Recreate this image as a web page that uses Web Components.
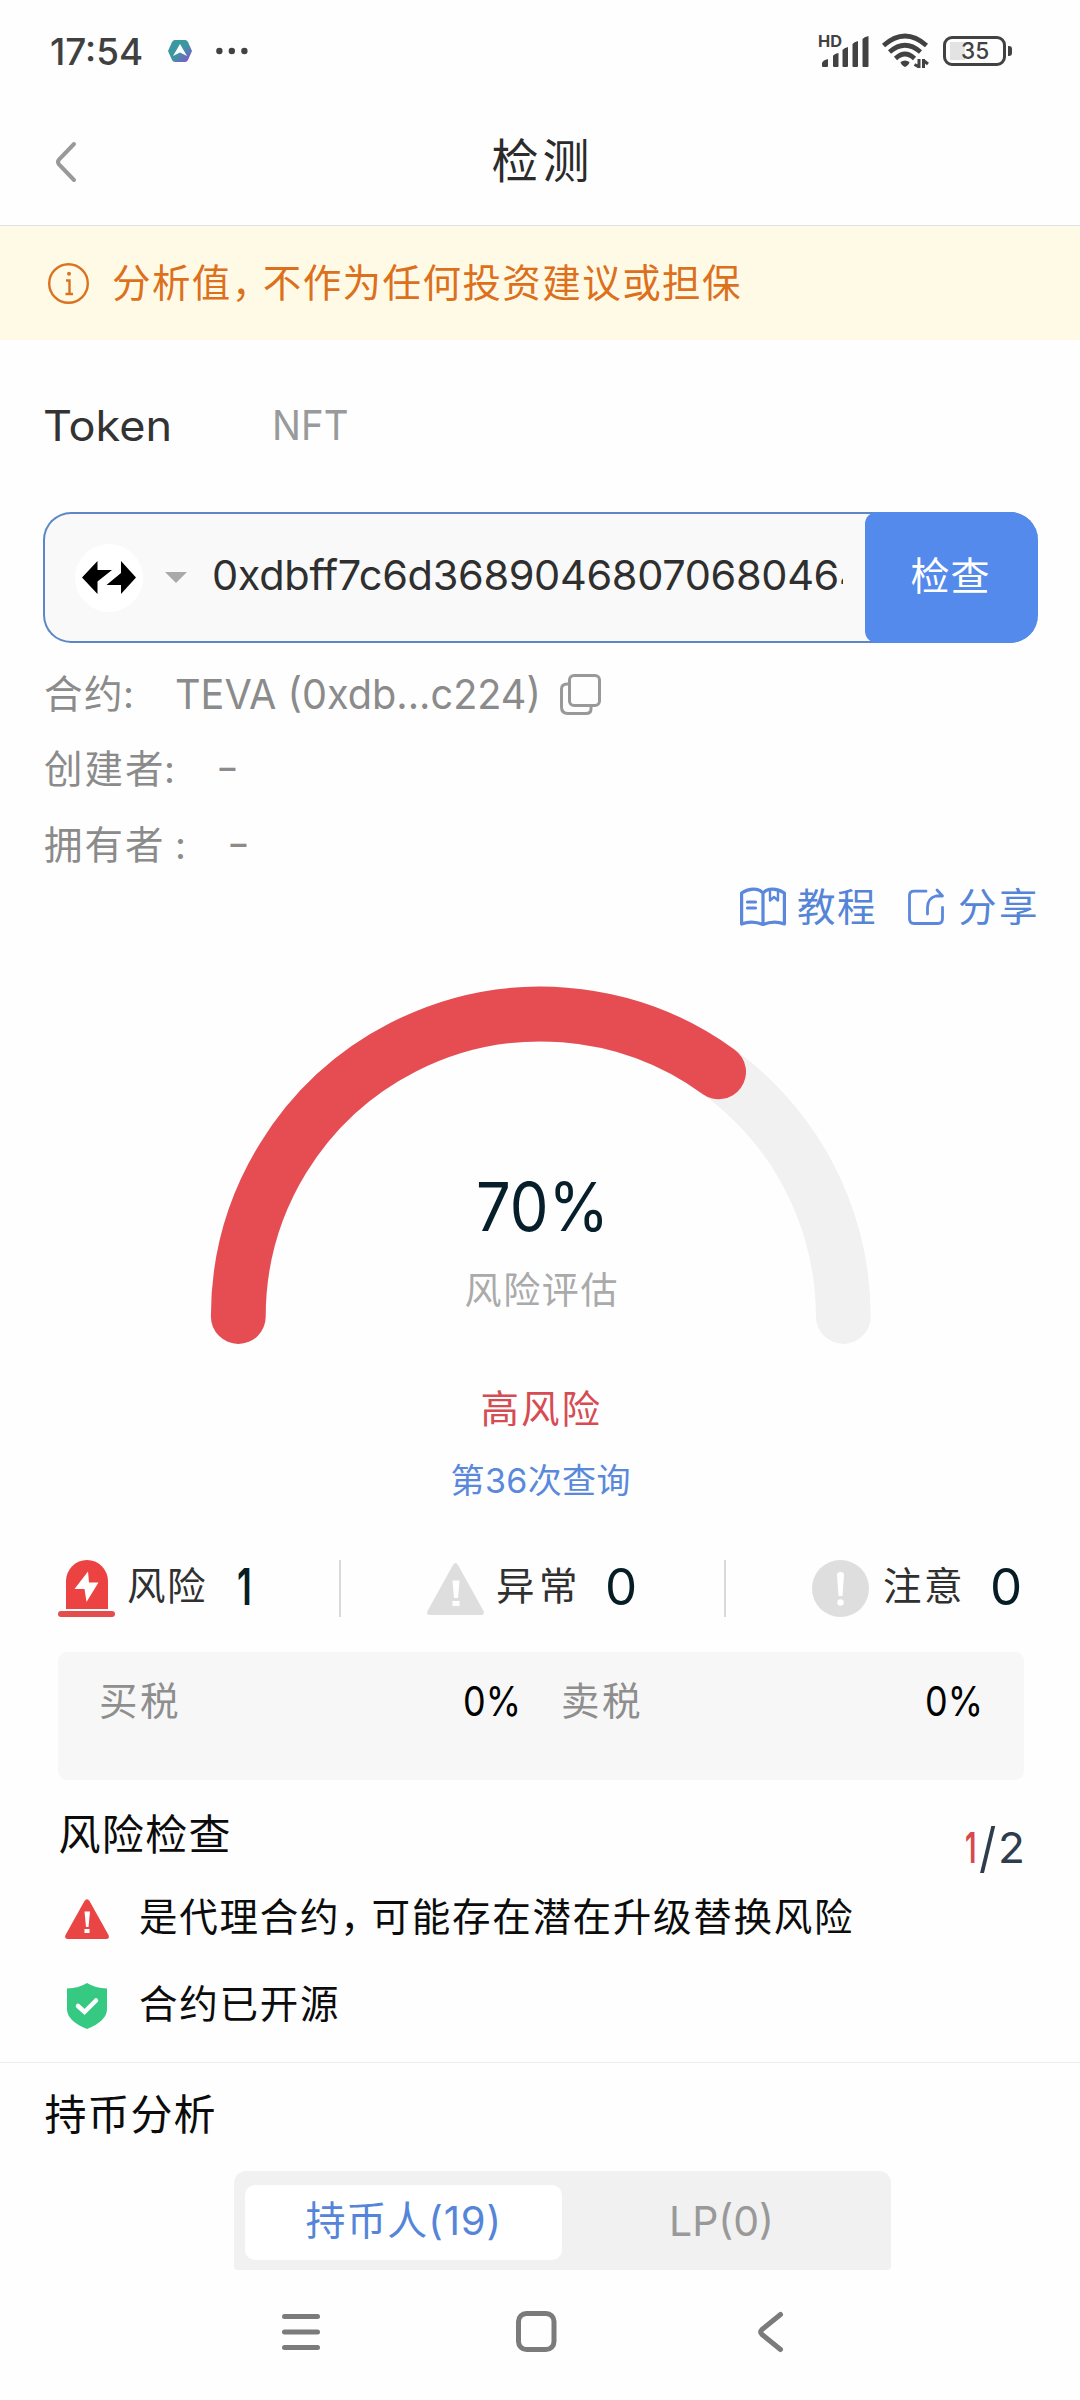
<!DOCTYPE html>
<html lang="zh-CN">
<head>
<meta charset="utf-8">
<title>检测</title>
<style>
html,body{margin:0;padding:0;background:#fefefe}
body{width:1080px;font-family:Inter,"Noto Sans CJK SC",sans-serif}
</style>
</head>
<body>
<token-check-page></token-check-page>
<script>
const FAMILY = 'Inter,"Noto Sans CJK SC",sans-serif';
const pen = document.createElement('canvas').getContext('2d');

/* One line of text whose ink spans exactly `w` pixels: tracked, or condensed/stretched with `fit`. */
class FitText extends HTMLElement {
  connectedCallback() {
    const text = this.getAttribute('text');
    const w = +this.getAttribute('w');
    const size = +this.getAttribute('size') || 38;
    const weight = this.getAttribute('weight') || 400;
    const color = this.getAttribute('color') || 'inherit';
    const stretch = this.hasAttribute('fit');
    pen.font = `${weight} ${size}px ${FAMILY}`;
    const m = pen.measureText(text);
    const ink = m.actualBoundingBoxLeft + m.actualBoundingBoxRight;
    const commas = text.split('，').length - 1;
    const n = [...text].length;
    const ls = n > 1 && !stretch ? (w - ink + commas * 9) / (n - 1) : 0;
    const k = stretch ? w / ink : 1;
    const body = text.split('，').join(`<span style="letter-spacing:${ls - 9}px">，</span>`);
    this.attachShadow({mode: 'open'}).innerHTML = `<style>
      :host{display:block;flex:none;width:${w}px;height:1.5em;line-height:1.5;font-family:${FAMILY};font-size:${size}px;font-weight:${weight};color:${color};white-space:pre}
      div{margin-left:${m.actualBoundingBoxLeft * k}px;letter-spacing:${ls}px;width:max-content;${stretch ? `transform:scaleX(${k});transform-origin:0 0` : ''}}
    </style><div>${body}</div>`;
  }
}
customElements.define('fit-text', FitText);

const define = (name, css, html) => {
  const t = document.createElement('template');
  t.innerHTML = `<style>:host{display:block;box-sizing:border-box}*{box-sizing:border-box}svg,i{display:block;flex:none;overflow:visible}.row{display:flex;align-items:center}${css}</style>${html}`;
  customElements.define(name, class extends HTMLElement {
    constructor() {
      super();
      this.attachShadow({mode: 'open'}).append(t.content.cloneNode(true));
    }
  });
};

define('status-bar', `
  :host{height:102px;padding:0 68px 0 51px;display:flex;align-items:center;justify-content:space-between}
  .hex{margin:0 24px 0 26px}
  .signal{width:50px;margin-right:13px}
  .battery{width:63px;height:30px;border:3px solid #424242;border-radius:9px;margin-left:15px;background:linear-gradient(#e3e3e3,#e3e3e3) 4px 3px/15px 18px no-repeat;display:flex;align-items:center;padding-left:16px}
  .nub{width:4px;height:10px;border-radius:0 3px 3px 0;background:#424242;margin-left:2px}
`, `
  <div class="row">
    <fit-text fit style="margin-top:2px" text="17:54" w="91" size="37" weight="500" color="#404040"></fit-text>
    <svg class="hex" width="24" height="22" viewBox="0 0 24 22"><defs><linearGradient id="g" x1="0" y1="0" x2="1" y2="1"><stop offset=".5" stop-color="#3b98a0"/><stop offset=".85" stop-color="#7561c6"/></linearGradient></defs><path d="M7 0H17Q19 0 20 2L24 11L20 20Q19 22 17 22H7Q5 22 4 20L0 11L4 2Q5 0 7 0Z" fill="url(#g)"/><path d="M12 4L19 16L12 12.5L5 16Z" fill="#fff"/></svg>
    <svg width="32" height="8" viewBox="0 0 32 8" fill="#424242"><circle cx="3.400" cy="4" r="3.200"/><circle cx="15.800" cy="4" r="3.200"/><circle cx="28.400" cy="4" r="3.200"/></svg>
  </div>
  <div class="row">
    <svg class="signal" height="32" viewBox="0 0 50 32" fill="#424242"><text x="-1" y="12" font-family="Inter" font-weight="700" font-size="15.5" textLength="24" lengthAdjust="spacingAndGlyphs">HD</text><path d="M3 31V28Q4 25 9 24V31Q9 32 8 32H4Q3 32 3 31ZM14 31V21Q15 19 19.500 18V31Q19.500 32 18.500 32H15Q14 32 14 31ZM23.500 31V15Q25 13 29 12V31Q29 32 28 32H24.500Q23.500 32 23.500 31ZM33.500 31V9Q35 7 39 6V31Q39 32 38 32H34.500Q33.500 32 33.500 31ZM43.500 31V4Q45 2 49.500 1V31Q49.500 32 48.500 32H44.500Q43.500 32 43.500 31Z"/></svg>
    <svg width="46" height="34" viewBox="0 0 46 34" fill="none" stroke="#424242" stroke-width="4.600"><path d="M1.500 11.500Q23-7.500 44.500 11.500"/><path d="M7.500 18Q23 4.500 38.500 18"/><path d="M13.500 24.500Q23 15.500 32.500 24.500"/><path d="M18.500 28Q23 25 27.500 28Q27 31 23 33Q19 31 18.500 28Z" fill="#424242" stroke="none"/><path d="M37 25V34M32.500 30.500L37 33M41.500 34V25M41.500 26.500L46 30" stroke-width="3"/></svg>
    <div class="battery"><fit-text fit text="35" w="26" size="23" weight="500" color="#424242"></fit-text></div>
    <div class="nub"></div>
  </div>
`);

define('title-bar', `
  :host{height:124px;padding:0 57px 4px 56px;display:flex;align-items:center;justify-content:space-between;border-bottom:1px solid #dde2ea}
  i{width:20px}
`, `
  <svg width="20" height="40" viewBox="0 0 20 40" fill="none" stroke="#999" stroke-width="4" stroke-linecap="round"><path d="M18 2L3 17.500Q1 20 3 22.500L18 38"/></svg>
  <fit-text text="检测" w="94" size="47" color="#2b2b2b"></fit-text><i></i>
`);

define('notice-bar', `
  :host{height:114px;background:#fffae6;padding:1px 48px 0;display:flex;align-items:center;gap:24px}
`, `
  <svg width="41" height="41" viewBox="0 0 41 41" fill="none" stroke="#d9731f" stroke-width="2.400"><circle cx="20.500" cy="20.500" r="19.300"/><path d="M18 17.500H21.500V31M17.500 31H25"/><circle cx="21" cy="10.800" r="2" fill="#d9731f" stroke="none"/></svg>
  <fit-text text="分析值，不作为任何投资建议或担保" w="627" size="38.500" color="#dc701c"></fit-text>
`);

define('type-tabs', `
  :host{height:170px;padding-left:45px;display:flex;align-items:center;gap:106px}
`, `
  <fit-text fit text="Token" w="124" size="42" color="#333"></fit-text>
  <fit-text fit text="NFT" w="72" size="41.500" color="#989a9b"></fit-text>
`);

define('contract-search', `
  :host{margin:2px 42px 0 43px;height:131px;display:flex;border:2px solid #5b87c8;border-right:0;border-radius:28px;background:#f9f9f9;align-items:center}
  .logo{width:68px;height:68px;border-radius:50%;background:#fff;margin-left:30px;display:flex;align-items:center;justify-content:center}
  .caret{margin:0 27px 0 22px}
  .field{width:629px;overflow:hidden;margin-bottom:4px}
  button{all:unset;box-sizing:border-box;align-self:stretch;margin:-2px 0 -2px auto;width:173px;background:#548aec;border-radius:12px 28px 28px 12px;display:flex;align-items:center;justify-content:center;padding:0 3px 3px 0}
`, `
  <div class="logo"><svg width="54" height="33" viewBox="0 0 54 33"><path d="M0 16.500L15.500 0V9H30L15.500 20.500V33ZM54 16.500L39 0V12L24.500 24H39V33Z"/></svg></div>
  <svg class="caret" width="22" height="11" viewBox="0 0 22 11"><path d="M0 0H22L11 11Z" fill="#a9a9a9"/></svg>
  <div class="field"><fit-text text="0xdbff7c6d36890468070680464" w="650" size="41.500" color="#2f2f2f"></fit-text></div>
  <button><fit-text text="检查" w="77" size="39" color="#fff"></fit-text></button>
`);

define('contract-info', `
  :host{padding:13.500px 0 0 45px;color:#8b8b8b}
  .row{height:75.500px}
  svg{margin-left:23px}
`, `
  <div class="row"><fit-text style="margin-top:1px" text="合约" w="75" size="38.500"></fit-text><fit-text style="margin-left:5px" text=":" w="5" size="38"></fit-text><fit-text fit style="margin-left:46px" text="TEVA (0xdb...c224)" w="361" size="41.500"></fit-text>
    <svg width="41" height="41" viewBox="0 0 41 41" fill="none" stroke="#999" stroke-width="3"><rect x="9.500" y="1.500" width="30" height="30" rx="4.500"/><path d="M9 10H7Q1.500 10 1.500 15V33Q1.500 39.500 8 39.500H26Q31 39.500 31 35V32"/></svg></div>
  <div class="row"><fit-text style="margin-top:1px" text="创建者" w="117" size="38.500"></fit-text><fit-text style="margin-left:4px" text=":" w="5" size="38"></fit-text><fit-text fit style="margin-left:47px;margin-top:-4px" text="-" w="17" size="41"></fit-text></div>
  <div class="row"><fit-text style="margin-top:1px" text="拥有者" w="117" size="38.500"></fit-text><fit-text style="margin-left:15px" text=":" w="5" size="38"></fit-text><fit-text fit style="margin-left:47px;margin-top:-4px" text="-" w="17" size="41"></fit-text></div>
`);

define('action-links', `
  :host{height:47px;padding-right:44px;display:flex;align-items:center;justify-content:flex-end;color:#5585d6}
  svg{fill:none;stroke:#5b88dc;stroke-width:3.200;stroke-linecap:round;stroke-linejoin:round}
  fit-text{padding-top:1px}
`, `
  <svg width="46" height="38" viewBox="0 0 46 38"><path d="M1.600 36V5Q11-1 20 2.500L23 5L26 2.500Q35-1 44.400 5V36Q34 32 23 36.500Q12 32 1.600 36ZM23 5V36M7.500 14H15.500M7.500 20H15.500"/><path d="M30 2.500V12.500L34 9L38 12.500V2.500" stroke-width="2.400"/></svg>
  <fit-text style="margin:0 33px 0 12px" text="教程" w="77" size="38.500"></fit-text>
  <svg width="36" height="36" viewBox="0 0 36 36"><path d="M18 2.200H6Q1.500 2.200 1.500 6.500V29.500Q1.500 34.500 6 34.500H30Q34.500 34.500 34.500 29.500V18.500M19.500 25V18Q20 9 28 7H33.500M29 1L34.500 7" stroke-width="2.800"/></svg>
  <fit-text style="margin-left:15px" text="分享" w="77" size="38.500"></fit-text>
`);

define('risk-gauge', `
  :host{display:flex;flex-direction:column;align-items:center}
  .dial{display:grid;width:1080px;height:420.500px}
  .dial>*{grid-area:1/1}
  .label{display:flex;flex-direction:column;align-items:center;padding:226.500px 0 0 2px}
`, `
  <div class="dial">
    <svg width="1080" height="421" viewBox="0 930 1080 421" fill="none" stroke-width="54.800" stroke-linecap="round"><path d="M238.300 1316.500A302.500 302.500 0 0 1 843.300 1316.500" stroke="#f1f1f1"/><path d="M238.300 1316.500A302.500 302.500 0 0 1 718.600 1071.800" stroke="#e54d52"/></svg>
    <div class="label"><fit-text fit text="70%" w="124" size="67" color="#071f2b"></fit-text><fit-text style="margin-top:6px" text="风险评估" w="151" size="37" color="#aaa"></fit-text></div>
  </div>
  <fit-text style="margin:30.500px 0 0 2px" text="高风险" w="117" size="38.500" color="#d64c53"></fit-text>
  <fit-text style="margin-top:16px" text="第36次查询" w="177" size="34" color="#5a89dc"></fit-text>
`);

define('risk-summary', `
  :host{height:57px;margin:54px 60px 0 58px;display:flex;align-items:center;color:#303030}
  i{width:2px;height:57px;background:#d9d9d9}
  fit-text{margin-bottom:3px}
`, `
  <svg width="57" height="57" viewBox="0 0 57 57"><path d="M8 49V21A21 21 0 0 1 50 21V49Z" fill="#ec4242"/><rect y="51" width="57" height="6" rx="3" fill="#e34d4d"/><path d="M30 11.500L16.500 29H26.500L28.500 42L40.500 22.500H31Z" fill="#fff"/></svg>
  <fit-text style="margin-left:13px" text="风险" w="77" size="38.500"></fit-text>
  <fit-text fit style="margin-left:33px" text="1" w="11" size="51" weight="600" color="#071d26"></fit-text>
  <i style="margin:0 86px 0 90px"></i>
  <svg width="57" height="57" viewBox="0 0 57 57"><path d="M26 5Q28.500 1 31 5L56.500 51Q58 55 54 55H3Q-1 55 .5 51Z" fill="#dedede"/><path d="M25.500 20.500H32.500L31 38H27Z" fill="#fff"/><rect x="25.500" y="41" width="7" height="5" fill="#fff"/></svg>
  <fit-text style="margin-left:14px" text="异常" w="77" size="38.500"></fit-text>
  <fit-text fit style="margin-left:33px" text="0" w="27" size="51" color="#071d26"></fit-text>
  <i style="margin:0 86px 0 89px"></i>
  <svg width="57" height="57" viewBox="0 0 57 57"><circle cx="28.500" cy="28.500" r="28.500" fill="#dedede"/><path d="M25 15Q25 12 28.500 12T32 15L30.500 36H26.500Z" fill="#fff"/><circle cx="28.500" cy="42.500" r="3.200" fill="#fff"/></svg>
  <fit-text style="margin-left:15px" text="注意" w="76" size="38.500"></fit-text>
  <fit-text fit style="margin-left:33px" text="0" w="27" size="51" color="#071d26"></fit-text>
`);

define('tax-panel', `
  :host{height:128px;margin:35px 56.500px 0 58px;border-radius:9px;background:#f7f7f7;padding:19.500px 43px 0;display:flex;color:#000}
  .cell{display:flex;align-items:center;height:60px;flex:none}
  .cell :first-child{margin-top:2px}
`, `
  <div class="cell"><fit-text text="买税" w="77" size="38.500" color="#8e8e8e"></fit-text><fit-text fit style="margin-left:287px" text="0%" w="53" size="41.500"></fit-text></div>
  <div class="cell" style="margin-left:45px"><fit-text text="卖税" w="77" size="38.500" color="#8e8e8e"></fit-text><fit-text fit style="margin-left:287px" text="0%" w="53" size="41.500"></fit-text></div>
`);

define('risk-checks', `
  :host{height:283px;padding:0 58px 0 59.500px;border-bottom:1.500px solid #eee;color:#0c0c0c}
  .head{display:flex;justify-content:space-between;height:95px;padding-top:23px}
  .score{display:flex;align-items:center;height:89px}
  .item{height:86.500px}
`, `
  <div class="head"><fit-text text="风险检查" w="170" size="42"></fit-text>
    <div class="score"><fit-text fit text="1" w="9" size="42" weight="600" color="#d9484d"></fit-text><fit-text fit style="margin-left:5px" text="/" w="16" size="54" color="#2e3c4c"></fit-text><fit-text fit style="margin-left:5px" text="2" w="21" size="42" color="#2e3c4c"></fit-text></div></div>
  <div class="row item"><svg style="margin:2px 31px 0 5.500px" width="44" height="40" viewBox="0 0 44 40"><path d="M19.500 2Q22 -1.500 24.500 2L43.500 36Q45 40 41 40H3Q-1 40 .5 36Z" fill="#e94545"/><path d="M19.500 12.500H25L23.500 28H21Z" fill="#fff"/><rect x="19.500" y="30" width="5" height="4" fill="#fff"/></svg><fit-text text="是代理合约，可能存在潜在升级替换风险" w="712" size="38.500"></fit-text></div>
  <div class="row item"><svg style="margin:3px 33px 0 7.500px" width="40" height="46" viewBox="0 0 40 46"><path d="M20 0Q28 5 40 5.500V26Q40 38 20 46Q0 38 0 26V5.500Q12 5 20 0Z" fill="#36c982"/><path d="M11 23L17.500 29L29 17.500" fill="none" stroke="#fff" stroke-width="4.500" stroke-linecap="round"/></svg><fit-text text="合约已开源" w="198" size="38.500"></fit-text></div>
`);

define('holder-analysis', `
  :host{height:207px;padding:20.500px 0 0 45.500px}
  .seg{width:657px;height:99px;background:#f1f1f1;border-radius:12px 12px 4px 4px;margin:24.500px 0 0 188px;padding:14px 11px 10px;display:flex}
  .seg div{height:75px;border-radius:10px;display:flex;align-items:center;padding-bottom:2px}
  .on{width:317px;background:#fff;padding-left:62px}
  .off{padding-left:110px}
`, `
  <fit-text text="持币分析" w="169" size="42" color="#0c0c0c"></fit-text>
  <div class="seg"><div class="on"><fit-text text="持币人(19)" w="191" size="40" color="#5585d8"></fit-text></div><div class="off"><fit-text fit text="LP(0)" w="98" size="41.500" color="#999"></fit-text></div></div>
`);

define('system-nav', `
  :host{height:130px;padding:0 0 6px 282px;display:flex;align-items:center}
  svg{fill:none;stroke:#7b7b7b;stroke-width:5}
`, `
  <svg width="38" height="36" viewBox="0 0 38 36" stroke-linecap="round"><path d="M2.500 2.500H35.500M2.500 18H35.500M2.500 33.500H35.500"/></svg>
  <svg style="margin:0 202px 0 195.500px" width="40.500" height="41" viewBox="0 0 40.500 41"><rect x="2.500" y="2.500" width="35.500" height="36" rx="8"/></svg>
  <svg width="25" height="40" viewBox="0 0 25 40" stroke-linecap="round" stroke-linejoin="round"><path d="M22.500 2.500L4 17.500Q1.500 20 4 22.500L22.500 37.500"/></svg>
`);

define('token-check-page', `:host{display:flex;flex-direction:column;width:1080px;height:2400px;overflow:hidden;background:#fefefe}:host>*{flex:none}`, `
  <status-bar></status-bar><title-bar></title-bar><notice-bar></notice-bar><type-tabs></type-tabs>
  <contract-search></contract-search><contract-info></contract-info><action-links></action-links>
  <risk-gauge></risk-gauge><risk-summary></risk-summary><tax-panel></tax-panel><risk-checks></risk-checks>
  <holder-analysis></holder-analysis><system-nav></system-nav>
`);
</script>
</body>
</html>
